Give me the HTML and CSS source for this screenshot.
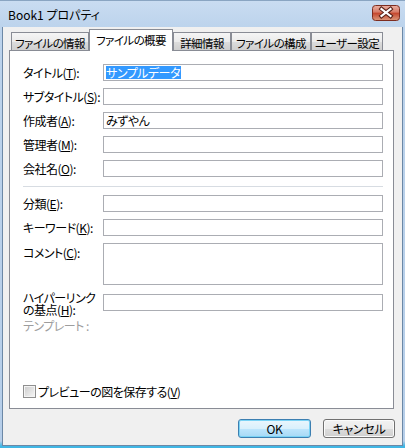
FILE: index.html
```html
<!DOCTYPE html>
<html lang="ja">
<head>
<meta charset="utf-8">
<title>Book1 プロパティ</title>
<link rel="stylesheet" href="styles.css">
</head>
<body>
<div class="window">
  <div class="titlebar">
    <span class="title">Book1 プロパティ</span>
    <span class="close">
      <svg width="28" height="16" viewBox="0 0 28 16">
        <defs>
          <linearGradient id="cg" x1="0" y1="0" x2="0" y2="1">
            <stop offset="0" stop-color="#eab1a4"/>
            <stop offset="0.45" stop-color="#d77a66"/>
            <stop offset="0.5" stop-color="#c4442c"/>
            <stop offset="1" stop-color="#dc9a7c"/>
          </linearGradient>
        </defs>
        <rect x="0.5" y="0.5" width="27" height="15" rx="3" fill="url(#cg)" stroke="#7d2d20"/>
        <path d="M9.5 4 L18.5 11 M18.5 4 L9.5 11" stroke="#5a2218" stroke-width="4.2" stroke-linecap="square"/>
        <path d="M9.5 4 L18.5 11 M18.5 4 L9.5 11" stroke="#ffffff" stroke-width="2.2" stroke-linecap="square"/>
      </svg>
    </span>
  </div>
  <div class="client">
    <div class="tabs">
      <div class="tab t1">ファイルの情報</div>
      <div class="tab active t2">ファイルの概要</div>
      <div class="tab t3">詳細情報</div>
      <div class="tab t4">ファイルの構成</div>
      <div class="tab t5">ユーザー設定</div>
    </div>
    <div class="panel">
      <div class="row"><span class="label">タイトル(<u>T</u>):</span><div class="field"><span class="sel">サンプルデータ</span></div></div>
      <div class="row"><span class="label">サブタイトル(<u>S</u>):</span><div class="field"></div></div>
      <div class="row"><span class="label">作成者(<u>A</u>):</span><div class="field"><span class="val">みずやん</span></div></div>
      <div class="row"><span class="label">管理者(<u>M</u>):</span><div class="field"></div></div>
      <div class="row"><span class="label">会社名(<u>O</u>):</span><div class="field"></div></div>
      <div class="sep"></div>
      <div class="row"><span class="label">分類(<u>E</u>):</span><div class="field"></div></div>
      <div class="row"><span class="label">キーワード(<u>K</u>):</span><div class="field"></div></div>
      <div class="row tall"><span class="label">コメント(<u>C</u>):</span><div class="field area"></div></div>
      <div class="row link">
        <div class="label two"><div class="ln">ハイパーリンク</div><div class="ln">の基点(<u>H</u>):</div></div>
        <div class="field"></div>
      </div>
      <div class="disabled">テンプレート :</div>
      <div class="check"><span class="box"></span><span>プレビューの図を保存する(<u>V</u>)</span></div>
    </div>
    <div class="buttons">
      <button class="btn ok">OK</button>
      <button class="btn">キャンセル</button>
    </div>
  </div>
</div>
</body>
</html>
```

FILE: styles.css
```css
* { box-sizing: border-box; margin: 0; padding: 0; }
html, body { width: 405px; height: 448px; overflow: hidden; }
body {
  font-family: "Noto Sans CJK JP", "Noto Sans", sans-serif;
  font-size: 12px;
  color: #000;
  font-feature-settings: "palt" 1;
  letter-spacing: -0.5px;
  background: #b9d1ea;
}
.window {
  width: 405px;
  height: 448px;
  display: flex;
  flex-direction: column;
  padding: 0 2px 2px 2px;
  background: linear-gradient(to bottom, #c9dcf1 0, #bcd3ec 27px, #b6cee9 440px, #41b6e4 445px, #41b6e4 448px);
  border-top: 1px solid #8aa5c2;
}
.titlebar {
  height: 26px;
  display: flex;
  align-items: center;
  padding: 0 3px 0 6px;
}
.title { font-size: 12px; line-height: 14px; margin-top: 1px; letter-spacing: 0; }
.close {
  margin-left: auto;
  align-self: flex-start;
  margin-top: 4px;
  width: 28px;
  height: 16px;
  display: block;
}
.close svg { display: block; }
.client {
  flex: 1;
  background: #f0f0f0;
  border: 1px solid #6c88a6;
  border-top: none;
  display: flex;
  flex-direction: column;
  padding-top: 2px;
}
.tabs {
  display: flex;
  align-items: flex-end;
  height: 22px;
  margin-left: 8px;
  margin-bottom: -1px;
  position: relative;
  z-index: 1;
}
.tab {
  height: 18px;
  margin-bottom: 1px;
  border: 1px solid #898c95;
  border-bottom: none;
  background: linear-gradient(to bottom, #f5f5f5 0, #ebebeb 50%, #dddddd 50%, #cfcfcf 100%);
  display: flex;
  align-items: center;
  justify-content: center;
  font-size: 11.5px;
  letter-spacing: -0.6px;
  line-height: 14px;
  padding-top: 2px;
  white-space: nowrap;
}
.tab.active {
  height: 22px;
  margin-bottom: 0;
  background: #fff;
  padding-top: 0;
  padding-bottom: 2px;
}
.t1 { width: 78px; }
.t2 { width: 84px; }
.t3 { width: 58px; }
.t4 { width: 80px; }
.t5 { width: 72px; }
.panel {
  margin-left: 6px;
  width: 385px;
  height: 359px;
  border: 1px solid #898c95;
  background: #fff;
  padding: 13px 10px 10px 13px;
  display: flex;
  flex-direction: column;
}
.row {
  display: flex;
  align-items: center;
  height: 17px;
  margin-bottom: 7px;
}
.label {
  width: 80px;
  flex: none;
  white-space: nowrap;
  line-height: 14px;
}
.field {
  flex: 1;
  height: 17px;
  border: 1px solid #abadb3;
  background: #fff;
  display: flex;
  align-items: center;
  padding-left: 2px;
}
.sel {
  background: #3399ff;
  color: #fff;
  height: 13px;
  line-height: 13px;
  padding: 0 1px 0 0;
}
.val { line-height: 13px; }
.sep {
  height: 1px;
  background: #d7dce2;
  margin: 2px 0 8px 0;
}
.row.tall {
  height: 42px;
  align-items: flex-start;
  margin-bottom: 9px;
}
.row.tall .field { height: 42px; }
.row.tall .label { margin-top: 3px; }
.row.link {
  align-items: flex-start;
  margin-bottom: 8px;
}
.label.two {
  margin-top: -2px;
  display: flex;
  flex-direction: column;
}
.ln {
  height: 12px;
  line-height: 12px;
  overflow: visible;
}
.disabled {
  color: #9d9d9d;
  line-height: 14px;
}
.check {
  margin-top: auto;
  height: 13px;
  display: flex;
  align-items: center;
  line-height: 14px;
}
.box {
  width: 13px;
  height: 13px;
  border: 1px solid #8f8f8f;
  background: linear-gradient(135deg, #cbcbcb, #f7f7f7);
  box-shadow: inset 0 0 0 1px #f4f4f4;
  margin-right: 2px;
  flex: none;
}
.buttons {
  display: flex;
  justify-content: flex-end;
  gap: 12px;
  margin-top: 10px;
  margin-right: 7px;
}
.btn {
  height: 19px;
  width: 72px;
  border: 1px solid #707070;
  border-radius: 3px;
  background: linear-gradient(to bottom, #f2f2f2 0, #ebebeb 50%, #dddddd 50%, #cfcfcf 100%);
  box-shadow: inset 0 0 0 1px #fbfbfb;
  font-family: inherit;
  font-size: 12px;
  font-feature-settings: "palt" 1;
  letter-spacing: -0.3px;
  line-height: 14px;
  color: #000;
}
.btn.ok {
  width: 73px;
  border-color: #3c7fb1;
  background: linear-gradient(to bottom, #eaf6fd 0, #d9f0fc 50%, #bee6fd 50%, #a7d9f5 100%);
  box-shadow: inset 0 0 0 1px #7ad3f5;
}
```
